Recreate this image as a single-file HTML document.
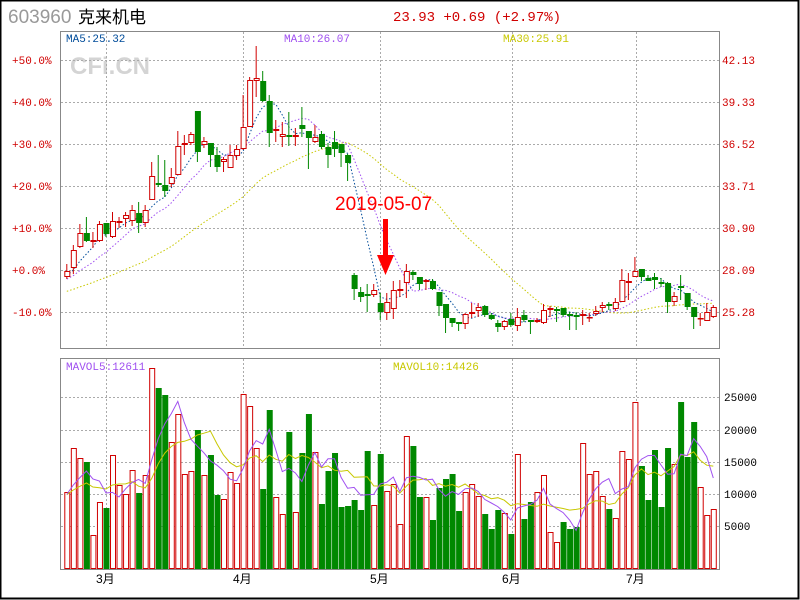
<!DOCTYPE html>
<html><head><meta charset="utf-8">
<style>
html,body{margin:0;padding:0;background:#fff;}
#wrap{position:relative;width:800px;height:600px;overflow:hidden;}
</style></head>
<body><div id="wrap">
<svg id="s" width="800" height="600" xmlns="http://www.w3.org/2000/svg" style="position:absolute;left:0;top:0;font-family:'Liberation Mono',monospace">
<rect x="0.5" y="0.5" width="798" height="598" fill="#fff" stroke="#000" stroke-width="2"/>
<text x="8" y="23" font-family="Liberation Sans,sans-serif" font-size="19" fill="#999">603960</text>
<text x="78" y="23" font-family="Liberation Sans,'Noto Sans CJK SC',sans-serif" font-size="17" fill="#000">克来机电</text>
<text x="393" y="21" font-size="14" fill="#d00000">23.93 +0.69 (+2.97%)</text>
<text x="70" y="74" font-family="Liberation Sans,sans-serif" font-weight="bold" font-size="24" fill="#d4d4d4">CFi.CN</text>
<g id="grid"></g>
<rect x="60.5" y="31.5" width="659" height="317" fill="none" stroke="#888"/>
<rect x="60.5" y="358.5" width="659" height="211" fill="none" stroke="#888"/>
<g id="main"></g>
<text x="66" y="42" font-size="11" fill="#004c9a">MA5:25.32</text>
<text x="284" y="42" font-size="11" fill="#a050f0">MA10:26.07</text>
<text x="503" y="42" font-size="11" fill="#c8c800">MA30:25.91</text>
<text x="66" y="370" font-size="11" fill="#a050f0">MAVOL5:12611</text>
<text x="393" y="370" font-size="11" fill="#c8c800">MAVOL10:14426</text>
<g font-size="11" fill="#d00000">
<text x="12" y="64">+50.0%</text><text x="12" y="106">+40.0%</text><text x="12" y="148">+30.0%</text>
<text x="12" y="190">+20.0%</text><text x="12" y="232">+10.0%</text><text x="12" y="274">+0.0%</text>
<text x="12" y="316">-10.0%</text>
<text x="722" y="64">42.13</text><text x="722" y="106">39.33</text><text x="722" y="148">36.52</text>
<text x="722" y="190">33.71</text><text x="722" y="232">30.90</text><text x="722" y="274">28.09</text>
<text x="722" y="316">25.28</text>
</g>
<g font-size="11" fill="#000">
<text x="724" y="401">25000</text><text x="724" y="434">20000</text><text x="724" y="466">15000</text>
<text x="724" y="498">10000</text><text x="724" y="530">5000</text>
</g>
<g font-family="Liberation Sans,'Noto Sans CJK SC',sans-serif" font-size="12" fill="#000">
<text x="96" y="583">3月</text><text x="233" y="583">4月</text><text x="370" y="583">5月</text>
<text x="502" y="583">6月</text><text x="626" y="583">7月</text>
</g>
<text x="335" y="210" font-family="Liberation Sans,sans-serif" font-size="19" fill="#f00">2019-05-07</text>
<rect x="383" y="219" width="5" height="37" fill="#f00"/>
<polygon points="377,255 394,255 385.5,275" fill="#f00"/>
</svg>
<script>
var C=[
[271,277,264,279,1],[250,268,245,274,1],[233,247,224,248,1],[233,241,217,242,0],[240,242,232,248,1],
[224,241,221,242,1],[223,234,223,237,0],[221,237,212,238,1],[221,223,217,228,1],[215,219,212,227,1],
[210,221,205,226,1],[213,223,202,233,0],[210,223,205,227,1],[176,200,162,200,1],[183,185,155,187,0],
[185,191,160,197,0],[177,184,168,187,1],[146,175,131,175,1],[143,145,135,155,1],[134,143,132,145,1],
[111,152,111,162,0],[141,145,137,148,1],[143,155,143,167,0],[155,167,147,172,0],[159,162,157,172,1],
[155,168,145,168,1],[149,156,145,160,1],[127,149,95,150,1],[80,127,77,127,1],[78,81,46,97,1],
[81,101,71,102,0],[101,133,95,147,0],[129,131,120,142,1],[134,137,122,147,1],[135,137,112,146,0],
[135,137,128,146,1],[125,129,107,137,0],[131,138,131,169,0],[137,142,125,143,1],[134,147,131,149,0],
[147,155,143,168,0],[142,149,131,157,0],[144,153,144,167,0],[155,163,154,181,0],[275,289,273,300,0],
[292,297,287,302,0],[294,296,284,312,0],[290,295,284,297,1],[303,312,293,320,0],[302,313,293,320,1],
[290,309,281,319,1],[289,291,280,297,1],[271,283,264,298,1],[272,275,270,280,0],[277,284,277,290,0],
[280,282,279,290,1],[281,289,279,290,0],[292,306,292,316,0],[304,318,304,333,0],[318,323,318,327,0],
[322,324,322,331,0],[314,324,313,329,1],[312,314,303,318,1],[307,311,303,317,1],[306,315,305,317,0],
[315,319,313,320,0],[323,327,320,332,0],[321,327,320,330,1],[319,325,313,327,0],[317,326,308,331,1],
[315,320,310,322,0],[320,322,320,334,0],[320,322,318,323,1],[310,323,304,324,1],[308,310,306,317,1],
[309,311,307,322,0],[308,315,308,317,0],[314,316,312,330,0],[315,317,312,330,0],[314,316,310,325,1],
[317,318,313,322,1],[311,314,306,316,1],[305,308,302,312,1],[304,306,302,310,0],[302,309,298,311,1],
[280,302,269,302,1],[281,283,273,300,1],[271,277,257,277,1],[269,277,269,281,0],[278,281,275,281,0],
[277,280,273,289,0],[282,284,278,287,0],[283,302,282,313,0],[296,302,292,306,1],[286,288,275,300,0],
[293,307,293,310,0],[307,317,307,329,0],[318,319,313,326,1],[312,321,303,321,1],[307,317,305,318,1]];
var V=[[492,1],[448,1],[458,1],[462,0],[535,1],[502,1],[508,0],[455,1],[485,1],[494,1],[470,1],[493,0],[475,1],[368,1],[388,0],[395,0],[442,1],[414,1],[474,1],[471,1],[430,0],[475,1],[455,0],[495,0],[499,1],[472,1],[483,1],[394,1],[406,1],[448,1],[489,0],[410,0],[497,1],[514,1],[432,0],[512,1],[453,0],[414,0],[452,1],[504,0],[471,0],[453,0],[507,0],[506,0],[500,0],[510,0],[451,0],[505,1],[454,0],[491,1],[484,1],[524,1],[436,1],[446,0],[497,0],[497,1],[520,0],[488,0],[479,0],[474,0],[511,0],[492,1],[484,1],[496,1],[514,0],[529,0],[510,0],[513,1],[534,0],[454,1],[519,0],[502,0],[492,1],[475,1],[532,1],[542,1],[522,0],[529,0],[527,0],[443,1],[474,1],[471,1],[496,1],[509,0],[518,1],[451,1],[459,1],[402,1],[466,0],[500,0],[450,0],[507,0],[448,0],[464,1],[402,0],[457,0],[422,0],[487,1],[515,1],[509,1]];
var NS="http://www.w3.org/2000/svg",out="";
function X(i){return 64.3+6.53*i;}
// grid
var g="";
[60,102,144,186,228,270,312].forEach(function(y){g+='<line x1="61" x2="719" y1="'+(y+.5)+'" y2="'+(y+.5)+'" stroke="#aaa" stroke-dasharray="2,2"/>';});
[397,430,462,494,526].forEach(function(y){g+='<line x1="61" x2="719" y1="'+(y+.5)+'" y2="'+(y+.5)+'" stroke="#aaa" stroke-dasharray="2,2"/>';});
[106,243,380,512,636].forEach(function(x){g+='<line y1="32" y2="348" x1="'+(x+.5)+'" x2="'+(x+.5)+'" stroke="#aaa" stroke-dasharray="2,2"/><line y1="359" y2="569" x1="'+(x+.5)+'" x2="'+(x+.5)+'" stroke="#aaa" stroke-dasharray="2,2"/>';});
document.getElementById("grid").innerHTML=g;
// MA computation
var cl=C.map(function(c){return c[4]?c[0]:c[1];});
var pre=[];for(var k=0;k<30;k++)pre.push(310-k*1.2);
var all=pre.concat(cl);
function ma(arr,n,off){var r=[];for(var i=0;i<arr.length-off;i++){var s=0;for(var j=0;j<n;j++)s+=arr[i+off-j];r.push(s/n);}return r;}
function poly(vals,col,dash){var p=vals.map(function(v,i){return (X(i)+2.5).toFixed(1)+","+v.toFixed(1);}).join(" ");
return '<polyline points="'+p+'" fill="none" stroke="'+col+'" stroke-width="1" '+(dash?'stroke-dasharray="1.5,2"':'')+'/>';}
out+=poly(ma(all,30,30),"#c8c800",1);
out+=poly(ma(all,10,30),"#a050f0",1);
out+=poly(ma(all,5,30),"#004c9a",1);
// candles
C.forEach(function(c,i){var x=X(i),col=c[4]?"#d00000":"#008800",cx=x+2.5;
out+='<line x1="'+cx+'" x2="'+cx+'" y1="'+c[2]+'" y2="'+c[3]+'" stroke="'+col+'"/>';
var h=Math.max(c[1]-c[0],1);
if(c[4])out+='<rect x="'+(x+.5)+'" y="'+(c[0]+.5)+'" width="5" height="'+Math.max(h-1,0.5)+'" fill="#fff" stroke="'+col+'"/>';
else out+='<rect x="'+x+'" y="'+c[0]+'" width="6" height="'+h+'" fill="'+col+'"/>';});
// volume
V.forEach(function(v,i){var x=X(i);
if(v[1])out+='<rect x="'+(x+.5)+'" y="'+(v[0]+.5)+'" width="5" height="'+(568-v[0])+'" fill="#fff" stroke="#d00000"/>';
else out+='<rect x="'+x+'" y="'+v[0]+'" width="6" height="'+(569-v[0])+'" fill="#008800"/>';});
var vv=V.map(function(v){return v[0];});
var vp=[];for(k=0;k<10;k++)vp.push(495);
var va=vp.concat(vv);
out+=poly(ma(va,10,10),"#c8c800",0);
out+=poly(ma(va,5,10),"#a050f0",0);
document.getElementById("main").innerHTML=out;
</script>
</div></body></html>
